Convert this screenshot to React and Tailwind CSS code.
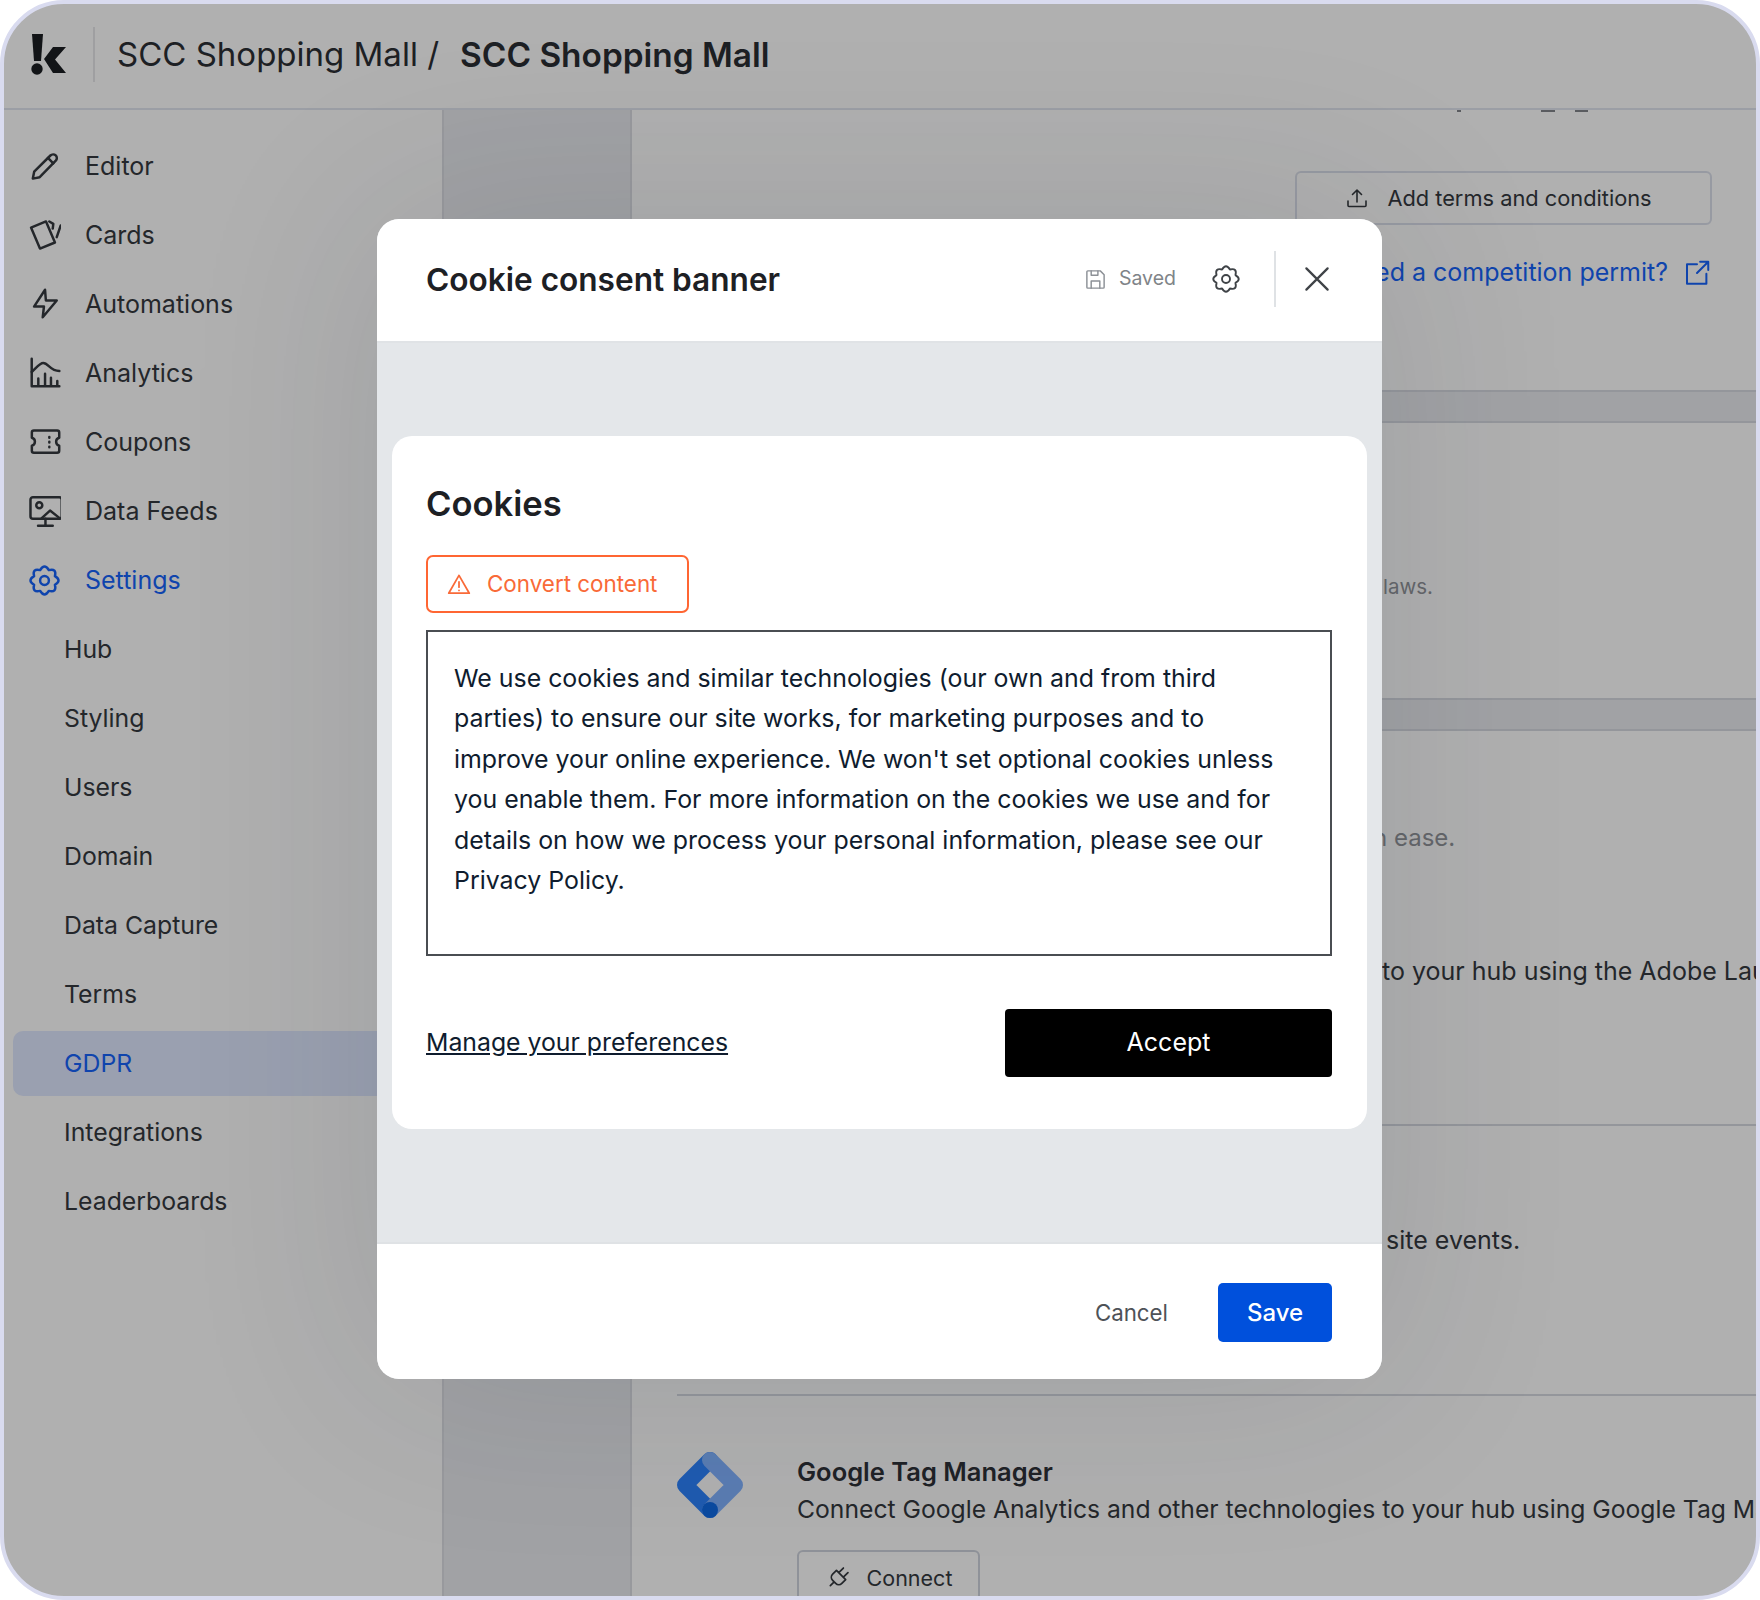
import React from 'react';

const I = ({ children, className = '', size = 33, sw = 1.8 }) => (
  <svg width={size} height={size} viewBox="0 0 24 24" fill="none" stroke="currentColor" strokeWidth={sw} strokeLinecap="round" strokeLinejoin="round" className={`shrink-0 ${className}`}>
    {children}
  </svg>
);

const gearPath = (() => {
  const pt = (r, a) => `${(12 + r * Math.cos(a)).toFixed(2)} ${(12 + r * Math.sin(a)).toFixed(2)}`;
  const n = 8;
  const step = (Math.PI * 2) / n;
  let d = `M${pt(8.2, -Math.PI / 2 - step / 2)}`;
  for (let i = 0; i < n; i++) {
    const c = -Math.PI / 2 + i * step;
    d += ` Q${pt(12.8, c)} ${pt(8.2, c + step / 2)}`;
  }
  return d + 'Z';
})();

const gear = (
  <>
    <circle cx="12" cy="12" r="3.2" />
    <path d={gearPath} />
  </>
);

const icons = {
  Editor: <><path d="M3.500 20.800l1-5L16.300 4a2.700 2.700 0 0 1 3.900 3.800L8.500 19.800z" /><path d="M14.500 5.800l3.900 3.900" /></>,
  Cards: <><path d="M2.200 6.200L13.100 1.800 19.600 17.100 8.700 21.500z" /><path d="M15.500 1.800l2.900 1.700-.4 3.500M23.800 4.700l-2.900 8.500" /></>,
  Automations: <path d="M12.400 1.300L4.400 13.500h7.200l-.9 7.800 10.200-12.200H13z" />,
  Analytics: <><path d="M2.700 1.200v20.100h20.100" /><path d="M2.700 10.900C6 8 8.500 4.400 11.100 4.400c3.700 0 5 5.800 11.700 5.800" /><path d="M7.500 21v-5.300M12.400 21v-8.900M16.700 21v-6M21.300 21v-3.500" /></>,
  Coupons: <><path d="M4.300 3.300h16.900a1.500 1.500 0 0 1 1.500 1.500v3.700a3 3 0 0 0 0 5.800v3.700a1.500 1.500 0 0 1-1.500 1.500H4.300A1.500 1.500 0 0 1 2.800 18v-3.700a3 3 0 0 0 0-5.800V4.800a1.500 1.500 0 0 1 1.500-1.500z" /><path d="M15.500 8v.5M15.500 11.500v.5M15.500 15v.5" /></>,
  'Data Feeds': <><rect x="1.800" y="1.600" width="22.700" height="15.700" rx="1.800" /><circle cx="8.200" cy="7.400" r="2.200" /><path d="M10 16.800l6-5.500 7 5.500" /><path d="M12.700 17.300v4.900M7.300 22.400h10.700" /></>,
  Settings: gear,
};

const NavRow = ({ label, active }) => (
  <div className={`h-[69px] flex items-center gap-[24px] pl-[24px] text-[25px] ${active ? 'text-[#0f44ad]' : 'text-[#24272b]'}`}>
    <I>{icons[label]}</I>
    <span>{label}</span>
  </div>
);

const SubRow = ({ label, active }) => (
  <div className={`h-[65px] flex items-center pl-[51px] ml-[9px] rounded-l-[10px] text-[24.800px] ${active ? 'bg-[#9aa0b0] text-[#0f44ad]' : 'text-[#24272b]'}`}>
    {label}
  </div>
);

export default function App() {
  const top = ['Editor', 'Cards', 'Automations', 'Analytics', 'Coupons', 'Data Feeds', 'Settings'];
  const sub = ['Hub', 'Styling', 'Users', 'Domain', 'Data Capture', 'Terms', 'GDPR', 'Integrations', 'Leaderboards'];
  return (
    <div className="relative w-[1760px] h-[1600px] bg-white overflow-hidden font-['Inter',sans-serif]">
      <div className="relative h-full border-4 border-[#d9dbef] rounded-[64px] overflow-hidden bg-[#b0b0b0] flex flex-col">
        <header className="h-[106px] shrink-0 border-b-2 border-[#9b9ea5] flex items-center">
          <svg width="36" height="42" viewBox="31 33 36 42" className="ml-[27px] mb-[4px] text-[#121417]" fill="currentColor">
            <path d="M32 34h11l-2 27h-7z" />
            <circle cx="37" cy="69" r="5.700" />
            <path d="M53 47h13L55 59.500 66 73H53L44 59z" />
          </svg>
          <div className="w-[2px] h-[55px] bg-[#9f9fa1] ml-[26px] mb-[3px]" />
          <div className="ml-[22px] mb-[2px] text-[33px] text-[#1d2024] whitespace-nowrap">SCC Shopping Mall /</div>
          <div className="ml-[21px] mb-[2px] text-[33.400px] font-semibold text-[#1d2024] whitespace-nowrap">SCC Shopping Mall</div>
        </header>
        <div className="flex-1 flex min-h-0">
          <nav className="w-[438px] shrink-0 pt-[22px]">
            {top.map((l) => <NavRow key={l} label={l} active={l === 'Settings'} />)}
            <div className="mt-[2px] flex flex-col gap-[4px]">
              {sub.map((l) => <SubRow key={l} label={l} active={l === 'GDPR'} />)}
            </div>
          </nav>
          <div className="w-[190px] shrink-0 bg-[#a1a2a5] border-x-2 border-[#98999d]" />
          <main className="flex-1 min-w-0 overflow-hidden text-[25px] text-[#24272b] whitespace-nowrap">
            <div className="h-[280px] pr-[44px] flex flex-col items-end">
              <div className="h-[2px] w-full flex items-start pl-[825px] text-[#4a4c50]">
                <span className="w-[4px] h-[2px] bg-[#5a5c60]" />
                <span className="ml-[80px] w-[14px] h-[2px] bg-[#5a5c60]" />
                <span className="ml-[20px] w-[13px] h-[2px] bg-[#5a5c60]" />
              </div>
              <div className="mt-[59px] w-[417px] h-[54px] border-2 border-[#979aa2] rounded-[6px] flex items-center justify-center gap-[18px] pr-[10px] text-[21.800px]">
                <I size={24} sw={1.600}><path d="M12 16V4M7.500 8.500L12 4l4.500 4.500" /><path d="M3 15v4.500a1 1 0 0 0 1 1h16a1 1 0 0 0 1-1V15" /></I>
                <span>Add terms and conditions</span>
              </div>
              <div className="mt-[29px] flex items-center gap-[14px] text-[25px] text-[#0f44ad]">
                <span>Do you need a competition permit?</span>
                <I size={30} sw={1.600}><path d="M12 5H4v15.500h15.500V12.500" /><path d="M21 3l-9 9M14.500 3H21v6.500" /></I>
              </div>
            </div>
            <div className="h-[33px] bg-[#a1a2a5] border-y-2 border-[#94969b]" />
            <div className="h-[275px] pt-[149px] pl-[751px] text-[#64666a] text-[20.500px]">laws.</div>
            <div className="h-[33px] bg-[#a1a2a5] border-y-2 border-[#94969b]" />
            <div className="h-[393px] flex flex-col pl-[741px]">
              <div className="mt-[89px] text-[#64666a] text-[24px]">n ease.</div>
              <div className="mt-[97px] ml-[9px]">to your hub using the Adobe Launch</div>
            </div>
            <div className="ml-[45px] h-[2px] bg-[#94969b]" />
            <div className="h-[268px] pt-[96px] pl-[754px]">site events.</div>
            <div className="ml-[45px] h-[2px] bg-[#94969b]" />
            <div className="flex pt-[58px] pl-[45px]">
              <svg width="66" height="66" viewBox="0 0 66 66" className="shrink-0 -mt-[2px]" fill="none" strokeWidth="16" strokeLinecap="round" strokeLinejoin="round">
                <path d="M33 8L8 33l25 25" stroke="#1f5bb0" />
                <path d="M33 8l25 25-25 25" stroke="#5a7cb2" />
                <circle cx="33" cy="58" r="8" fill="#0b4aa0" />
              </svg>
              <div className="ml-[54px] flex flex-col">
                <div className="font-semibold text-[25.500px] text-[#1f2226] leading-[36px]">Google Tag Manager</div>
                <div className="leading-[38px] text-[24.700px]">Connect Google Analytics and other technologies to your hub using Google Tag Manager</div>
                <div className="mt-[22px] w-[183px] h-[60px] pb-[4px] border-2 border-[#8f9299] rounded-[6px] flex items-center justify-center gap-[16px] text-[21.500px]">
                  <I size={26} sw={1.600}><g transform="rotate(45 12 12)"><path d="M12 22v-5M9 8V2M15 8V2M18 8v5a4 4 0 0 1-4 4h-4a4 4 0 0 1-4-4V8Z" /></g></I>
                  <span>Connect</span>
                </div>
              </div>
            </div>
          </main>
        </div>
      </div>

      <div className="absolute left-[377px] top-[219px] w-[1005px] h-[1160px] rounded-[22px] overflow-hidden bg-[#e4e7ea] flex flex-col shadow-[0_0_200px_rgba(30,40,60,0.12)]">
        <div className="h-[124px] shrink-0 bg-white border-b-2 border-[#e0e3e6] flex items-center pl-[49px] pr-[50px]">
          <div className="text-[31.600px] font-semibold text-[#1d2024] flex-1">Cookie consent banner</div>
          <div className="flex items-center mb-[2px]">
            <I size={23} sw={1.500} className="text-[#8c9096]"><path d="M4 3h13l4 4v13a1 1 0 0 1-1 1H4a1 1 0 0 1-1-1V4a1 1 0 0 1 1-1z" /><path d="M7.500 21v-7.500h9V21M7.500 3v4.500h7V3" /></I>
            <span className="ml-[12px] text-[19.500px] text-[#808488]">Saved</span>
            <I size={30} sw={1.500} className="ml-[35px] text-[#3f4347]">{gear}</I>
            <div className="w-[2px] h-[56px] bg-[#dfe2e5] ml-[33px]" />
            <I size={30} sw={1.800} className="ml-[26px] text-[#3f4347]"><path d="M3.500 3.500l17 17M20.500 3.500l-17 17" /></I>
          </div>
        </div>
        <div className="flex-1 pt-[93px] px-[15px]">
          <div className="h-[693px] bg-white rounded-[20px] pt-[45px] pl-[34px] pr-[35px] flex flex-col">
            <div className="text-[34.600px] font-semibold text-[#1d2024] leading-[44px]">Cookies</div>
            <div className="mt-[30px] w-[263px] h-[58px] border-2 border-[#ff6633] rounded-[7px] flex items-center pl-[18px] gap-[15px] text-[#f96a38] text-[22.400px]">
              <I size={26} sw={1.600}><path d="M12 4L2.500 20.500h19z" /><path d="M12 10v5M12 17.800v.2" /></I>
              <span>Convert content</span>
            </div>
            <div className="mt-[17px] h-[326px] border-2 border-[#4a4d52] pt-[26px] pl-[26px] pr-[45px] text-[24.900px] leading-[40.400px] text-[#0f1c2e]">
              We use cookies and similar technologies (our own and from third parties) to ensure our site works, for marketing purposes and to improve your online experience. We won't set optional cookies unless you enable them. For more information on the cookies we use and for details on how we process your personal information, please see our Privacy Policy.
            </div>
            <div className="mt-[53px] flex items-center justify-between">
              <span className="text-[24.800px] underline text-[#0f1c2e]">Manage your preferences</span>
              <div className="w-[327px] h-[68px] bg-black rounded-[4px] text-white flex items-center justify-center text-[25px]">Accept</div>
            </div>
          </div>
        </div>
        <div className="h-[137px] pt-[2px] shrink-0 bg-white border-t-2 border-[#dfe2e5] flex items-center justify-end pr-[50px]">
          <span className="text-[#4e5257] text-[22.300px]">Cancel</span>
          <div className="ml-[50px] w-[114px] h-[59px] bg-[#0050dc] rounded-[5px] text-white flex items-center justify-center text-[24px] font-medium">Save</div>
        </div>
      </div>
    </div>
  );
}
